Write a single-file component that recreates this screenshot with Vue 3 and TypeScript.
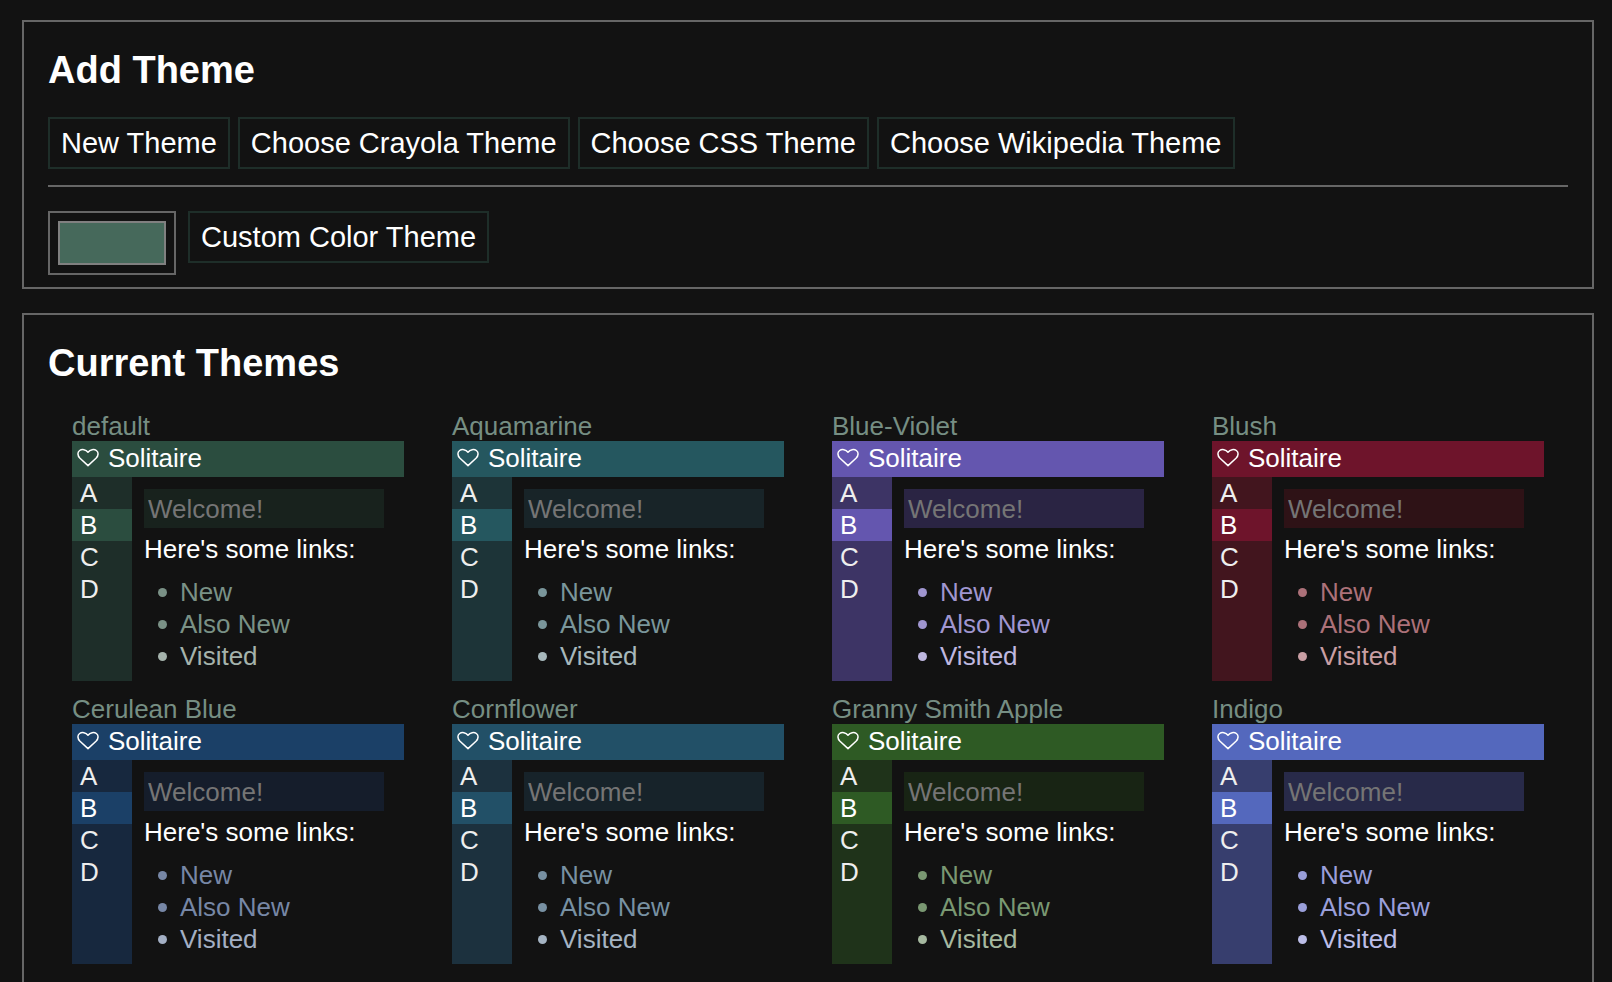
<script setup lang="ts">
import { ref } from 'vue'

interface Theme {
  name: string
  header: string
  side: string
  field: string
  link: string
  visited: string
}

const customColor = ref('#46695b')
const pickers: string[] = ['New Theme', 'Choose Crayola Theme', 'Choose CSS Theme', 'Choose Wikipedia Theme']
const sideItems: string[] = ['A', 'B', 'C', 'D']

const themes: Theme[] = [
  { name: 'default', header: '#2b4d3f', side: '#1e2e29', field: '#18221d', link: '#7a9186', visited: '#a5b3ac' },
  { name: 'Aquamarine', header: '#25575f', side: '#1d3438', field: '#182428', link: '#7a969b', visited: '#a7b8bc' },
  { name: 'Blue-Violet', header: '#6456af', side: '#3d3465', field: '#2a2443', link: '#a096d0', visited: '#bfb8e0' },
  { name: 'Blush', header: '#6e142b', side: '#42151e', field: '#2e1216', link: '#ac7179', visited: '#c99fa4' },
  { name: 'Cerulean Blue', header: '#1b4067', side: '#17283e', field: '#151d2b', link: '#7787a6', visited: '#a3afc4' },
  { name: 'Cornflower', header: '#225067', side: '#1c313e', field: '#17232a', link: '#7891a3', visited: '#a5b4c3' },
  { name: 'Granny Smith Apple', header: '#2e5a24', side: '#1f331a', field: '#182414', link: '#7a9872', visited: '#a6b9a0' },
  { name: 'Indigo', header: '#5468bd', side: '#373e6e', field: '#282a49', link: '#9a9fda', visited: '#bcbee8' },
]

function vars(t: Theme): Record<string, string> {
  return {
    '--header': t.header,
    '--side': t.side,
    '--field': t.field,
    '--link': t.link,
    '--visited': t.visited,
  }
}
</script>

<template>
  <main class="page">
    <section class="panel">
      <h3>Add Theme</h3>
      <div class="row">
        <button v-for="p in pickers" :key="p" type="button" class="btn">{{ p }}</button>
      </div>
      <hr />
      <div class="row custom">
        <input v-model="customColor" type="color" class="swatch" aria-label="Custom color" />
        <button type="button" class="btn">Custom Color Theme</button>
      </div>
    </section>

    <section class="panel">
      <h3>Current Themes</h3>
      <div class="themes">
        <article v-for="t in themes" :key="t.name" class="theme" :style="vars(t)">
          <div class="name">{{ t.name }}</div>
          <header class="bar">
            <svg class="heart" viewBox="0 0 24 20" aria-hidden="true">
              <path d="M12 17.6 4 10.2C1.2 7.4 1.4 4 3.6 2.5 6 .8 9.8 1.4 12 4.2 14.2 1.4 18 .8 20.4 2.5 22.6 4 22.8 7.4 20 10.2Z" />
            </svg>
            <span>Solitaire</span>
          </header>
          <div class="body">
            <nav class="side">
              <div v-for="s in sideItems" :key="s" class="item" :class="{ active: s === 'B' }">{{ s }}</div>
            </nav>
            <div class="content">
              <input type="text" class="field" placeholder="Welcome!" :aria-label="`${t.name} sample text`" />
              <div class="intro">Here's some links:</div>
              <ul class="links">
                <li><a href="#new">New</a></li>
                <li><a href="#also-new">Also New</a></li>
                <li class="seen"><a href="#visited">Visited</a></li>
              </ul>
            </div>
          </div>
        </article>
      </div>
    </section>
  </main>
</template>

<style>
html,
body {
  margin: 0;
  background: #121212;
}
</style>

<style scoped>
.page {
  box-sizing: border-box;
  height: 100vh;
  overflow: hidden;
  padding: 20px 18px 0 22px;
  color: #fff;
  font-family: "Liberation Sans", Arial, Helvetica, sans-serif;
  font-size: 26px;
  line-height: 32px;
}
.panel {
  border: 2px solid #666;
  padding: 24px 24px 12px;
  margin-bottom: 24px;
}
h3 {
  margin: 0 0 22px;
  font-size: 38px;
  line-height: 49px;
  font-weight: 700;
}
.row {
  display: flex;
  flex-wrap: wrap;
  align-items: flex-start;
  gap: 8px;
}
.custom {
  gap: 12px;
}
.btn {
  height: 52px;
  padding: 0 11px;
  border: 2px solid #1e2e29;
  border-radius: 0;
  background: transparent;
  color: #fff;
  font-family: inherit;
  font-size: 29px;
  line-height: 48px;
}
hr {
  margin: 16px 0 24px;
  border: 0;
  height: 2px;
  background: #666;
}
.swatch {
  appearance: none;
  box-sizing: border-box;
  width: 128px;
  height: 64px;
  padding: 8px;
  border: 2px solid #666;
  background: transparent;
}
.swatch::-webkit-color-swatch-wrapper {
  padding: 0;
}
.swatch::-webkit-color-swatch {
  border: 2px solid #808080;
  border-radius: 0;
}
.themes {
  display: grid;
  grid-template-columns: repeat(4, 1fr);
  column-gap: 48px;
  padding: 0 24px;
}
.theme {
  height: 283px;
}
.name {
  color: #768e83;
  height: 31px;
}
.bar {
  box-sizing: border-box;
  display: flex;
  align-items: center;
  height: 36px;
  padding: 0 4px 2px;
  gap: 8px;
  background: var(--header);
}
.heart {
  width: 24px;
  height: 20px;
  fill: none;
  stroke: #fff;
  stroke-width: 1.5;
  stroke-linejoin: round;
}
.body {
  display: flex;
  height: 204px;
}
.side {
  width: 60px;
  background: var(--side);
  color: #eee;
}
.item {
  padding-left: 8px;
}
.active {
  background: var(--header);
  color: #fff;
}
.content {
  flex: 1;
  padding: 12px 0 0 12px;
}
.field {
  display: block;
  box-sizing: border-box;
  width: 240px;
  height: 39px;
  padding: 2px 4px 0;
  border: 0;
  background: var(--field);
  color: #fff;
  font: inherit;
}
.field::placeholder {
  color: #757575;
  opacity: 1;
}
.intro {
  margin-top: 5px;
}
.links {
  margin: 11px 0 0;
  padding-left: 14px;
  list-style: none;
  color: var(--link);
}
.links li {
  display: flex;
  align-items: center;
  gap: 13px;
}
.links li::before {
  content: "";
  width: 9px;
  height: 9px;
  border-radius: 50%;
  background: currentColor;
}
.links .seen {
  color: var(--visited);
}
.links a {
  color: inherit;
  text-decoration: none;
}
</style>
